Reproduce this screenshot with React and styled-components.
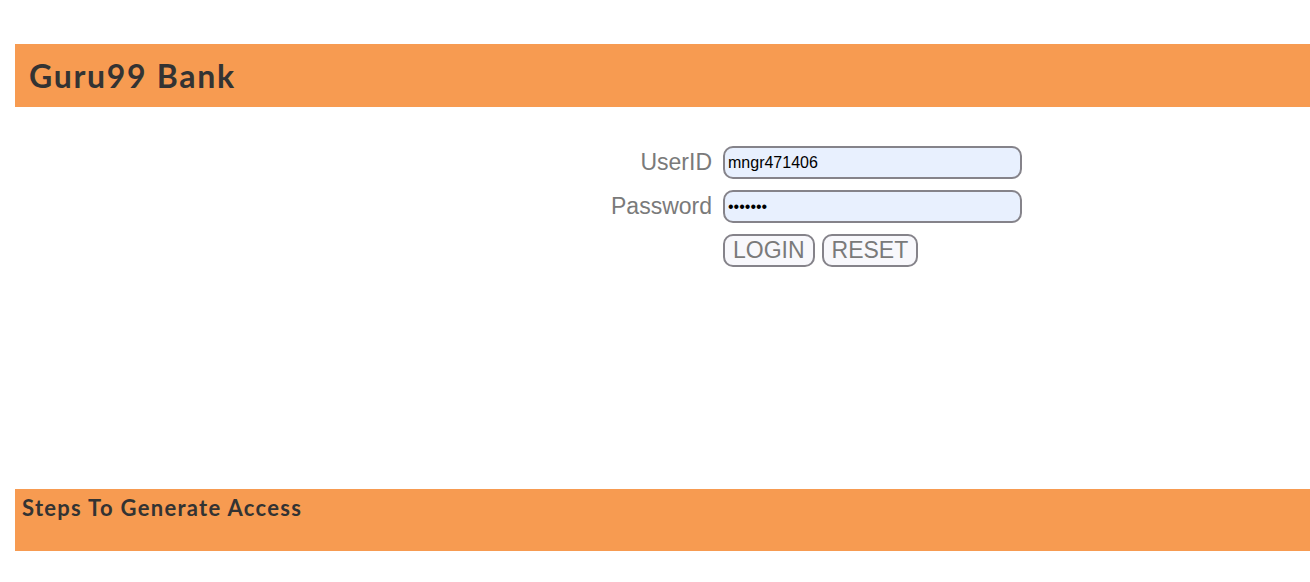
import React, { useState } from "react";
import styled, { createGlobalStyle } from "styled-components";

const GlobalStyle = createGlobalStyle`
  html, body {
    margin: 0;
    padding: 0;
    background: #fff;
    overflow: hidden;
  }
  body {
    font-family: "Liberation Sans", Arial, sans-serif;
  }
`;

const Page = styled.div`
  width: 1310px;
  height: 582px;
  padding-top: 44px;
  box-sizing: border-box;
  display: flex;
  flex-direction: column;
`;

const Banner = styled.div`
  margin-left: 15px;
  background: #f79b51;
  color: #333;
  font-family: Lato, "Noto Sans", sans-serif;
  font-weight: 700;
  height: ${(p) => p.height}px;
  box-sizing: border-box;
`;

const Title = styled.h2`
  margin: 0;
  padding: 12px 0 0 14px;
  font-size: 32px;
  line-height: 40px;
  letter-spacing: 1.7px;
  font-weight: 700;
`;

const Subtitle = styled.h3`
  margin: 0;
  padding: 5px 0 0 7px;
  font-size: 22px;
  line-height: 28px;
  letter-spacing: 1.3px;
  font-weight: 700;
`;

const Form = styled.form`
  margin-top: 39px;
  padding-left: 15px;
  display: grid;
  grid-template-columns: 697px 299px;
  column-gap: 11px;
  row-gap: 11px;
  align-items: center;
  height: 343px;
  align-content: start;
`;

const Label = styled.label`
  justify-self: end;
  font-size: 23px;
  color: #7a7a7a;
  line-height: 33px;
`;

const Field = styled.input`
  box-sizing: border-box;
  width: 299px;
  height: 33px;
  margin: 0;
  padding: 0 3px;
  border: 2px solid #85838a;
  border-radius: 10px;
  background: #e8f0fe;
  font-family: "Liberation Sans", Arial, sans-serif;
  font-size: 16px;
  color: #000;
  outline: none;
`;

const Buttons = styled.div`
  grid-column: 2;
  display: flex;
  gap: 7px;
`;

const Button = styled.button`
  box-sizing: border-box;
  height: 33px;
  margin: 0;
  padding: 0 8px;
  border: 2px solid #85838a;
  border-radius: 10px;
  background: #f8f8fc;
  color: #7a7a7a;
  font-family: "Liberation Sans", Arial, sans-serif;
  font-size: 23px;
  line-height: 29px;
  cursor: pointer;
`;

export default function App() {
  const [user, setUser] = useState("mngr471406");
  const [pass, setPass] = useState("1234567");

  return (
    <Page>
      <GlobalStyle />
      <Banner height={63}>
        <Title>Guru99 Bank</Title>
      </Banner>
      <Form onSubmit={(e) => e.preventDefault()}>
        <Label htmlFor="uid">UserID</Label>
        <Field id="uid" value={user} onChange={(e) => setUser(e.target.value)} />
        <Label htmlFor="pwd">Password</Label>
        <Field
          id="pwd"
          type="password"
          value={pass}
          onChange={(e) => setPass(e.target.value)}
        />
        <Buttons>
          <Button type="submit">LOGIN</Button>
          <Button
            type="button"
            onClick={() => {
              setUser("");
              setPass("");
            }}
          >
            RESET
          </Button>
        </Buttons>
      </Form>
      <Banner height={62}>
        <Subtitle>Steps To Generate Access</Subtitle>
      </Banner>
    </Page>
  );
}
